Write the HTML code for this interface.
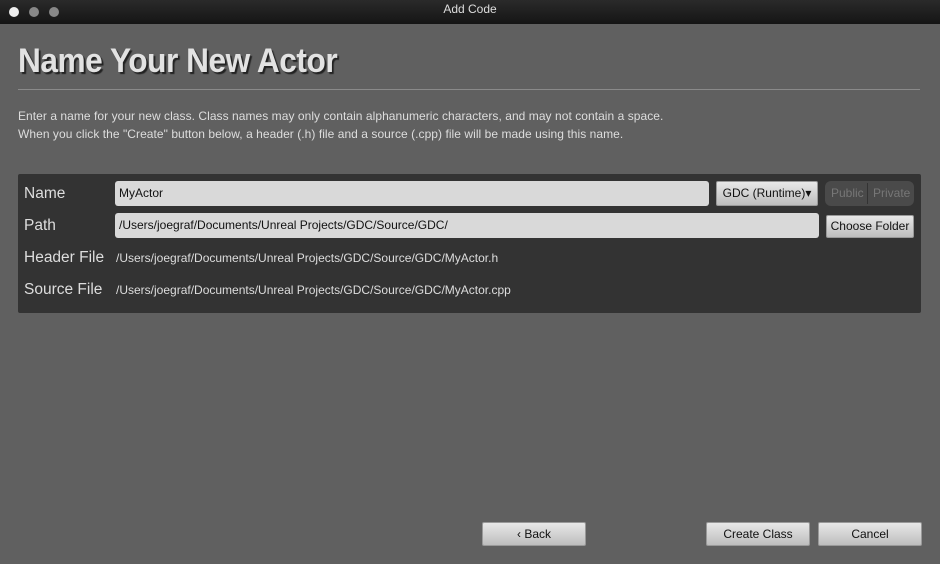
<!DOCTYPE html>
<html><head><style>
body{margin:0;width:940px;height:564px;background:#606060;font-family:"Liberation Sans",sans-serif;position:relative;overflow:hidden}
.a{position:absolute}
.tb{left:0;top:0;width:940px;height:24px;background:linear-gradient(#2a2a2a,#151515);color:#ddd;font-size:12px;text-align:center;line-height:18px}
.dot{width:10px;height:10px;border-radius:50%;top:7px}
h1{position:absolute;left:18px;top:42px;margin:0;font-size:34px;font-weight:bold;color:#e2e2e2;text-shadow:2px 2px 1px #222;letter-spacing:-0.5px;transform:scaleX(0.93);transform-origin:left}
.hr{left:18px;top:89px;width:902px;height:1px;background:#8a8a8a}
.p{left:18px;font-size:12px;color:#ddd;letter-spacing:0.05px}
.panel{left:18px;top:174px;width:903px;height:139px;background:#333;border-radius:2px}
.lbl{left:24px;font-size:15.5px;color:#ddd}
.inp{background:#d9d9d9;border-radius:3px;height:25px;font-size:12px;color:#111;line-height:25px;padding-left:4px;box-sizing:border-box}
.btn{background:linear-gradient(#e8e8e8,#bdbdbd);border:1px solid #999;border-radius:2px;font-size:12px;color:#111;text-align:center;box-sizing:border-box}
.t{font-size:12px;color:#ddd}
</style></head><body>
<div class="a tb">Add Code</div>
<div class="a dot" style="left:9px;background:#eee"></div>
<div class="a dot" style="left:29px;background:#888"></div>
<div class="a dot" style="left:49px;background:#888"></div>
<h1>Name Your New Actor</h1>
<div class="a hr"></div>
<div class="a p" style="top:109px">Enter a name for your new class. Class names may only contain alphanumeric characters, and may not contain a space.</div>
<div class="a p" style="top:127px">When you click the "Create" button below, a header (.h) file and a source (.cpp) file will be made using this name.</div>
<div class="a panel"></div>
<div class="a lbl" style="top:185px">Name</div>
<div class="a lbl" style="top:217px">Path</div>
<div class="a lbl" style="top:249px">Header File</div>
<div class="a lbl" style="top:281px">Source File</div>
<div class="a inp" style="left:115px;top:181px;width:594px">MyActor</div>
<div class="a btn" style="left:716px;top:181px;width:102px;height:25px;line-height:23px">GDC (Runtime)&#9662;</div>
<div class="a" style="left:825px;top:181px;width:89px;height:25px;background:#4a4a4a;border-radius:6px;font-size:12px;color:#777;line-height:25px"><span style="position:absolute;left:6px">Public</span><span style="position:absolute;left:42px;top:2px;width:1px;height:21px;background:#333"></span><span style="position:absolute;left:48px">Private</span></div>
<div class="a inp" style="left:115px;top:213px;width:704px">/Users/joegraf/Documents/Unreal Projects/GDC/Source/GDC/</div>
<div class="a btn" style="left:826px;top:215px;width:88px;height:23px;line-height:21px">Choose Folder</div>
<div class="a t" style="left:116px;top:251px">/Users/joegraf/Documents/Unreal Projects/GDC/Source/GDC/MyActor.h</div>
<div class="a t" style="left:116px;top:283px">/Users/joegraf/Documents/Unreal Projects/GDC/Source/GDC/MyActor.cpp</div>
<div class="a btn" style="left:482px;top:522px;width:104px;height:24px;line-height:22px">&#8249; Back</div>
<div class="a btn" style="left:706px;top:522px;width:104px;height:24px;line-height:22px">Create Class</div>
<div class="a btn" style="left:818px;top:522px;width:104px;height:24px;line-height:22px">Cancel</div>
</body></html>
